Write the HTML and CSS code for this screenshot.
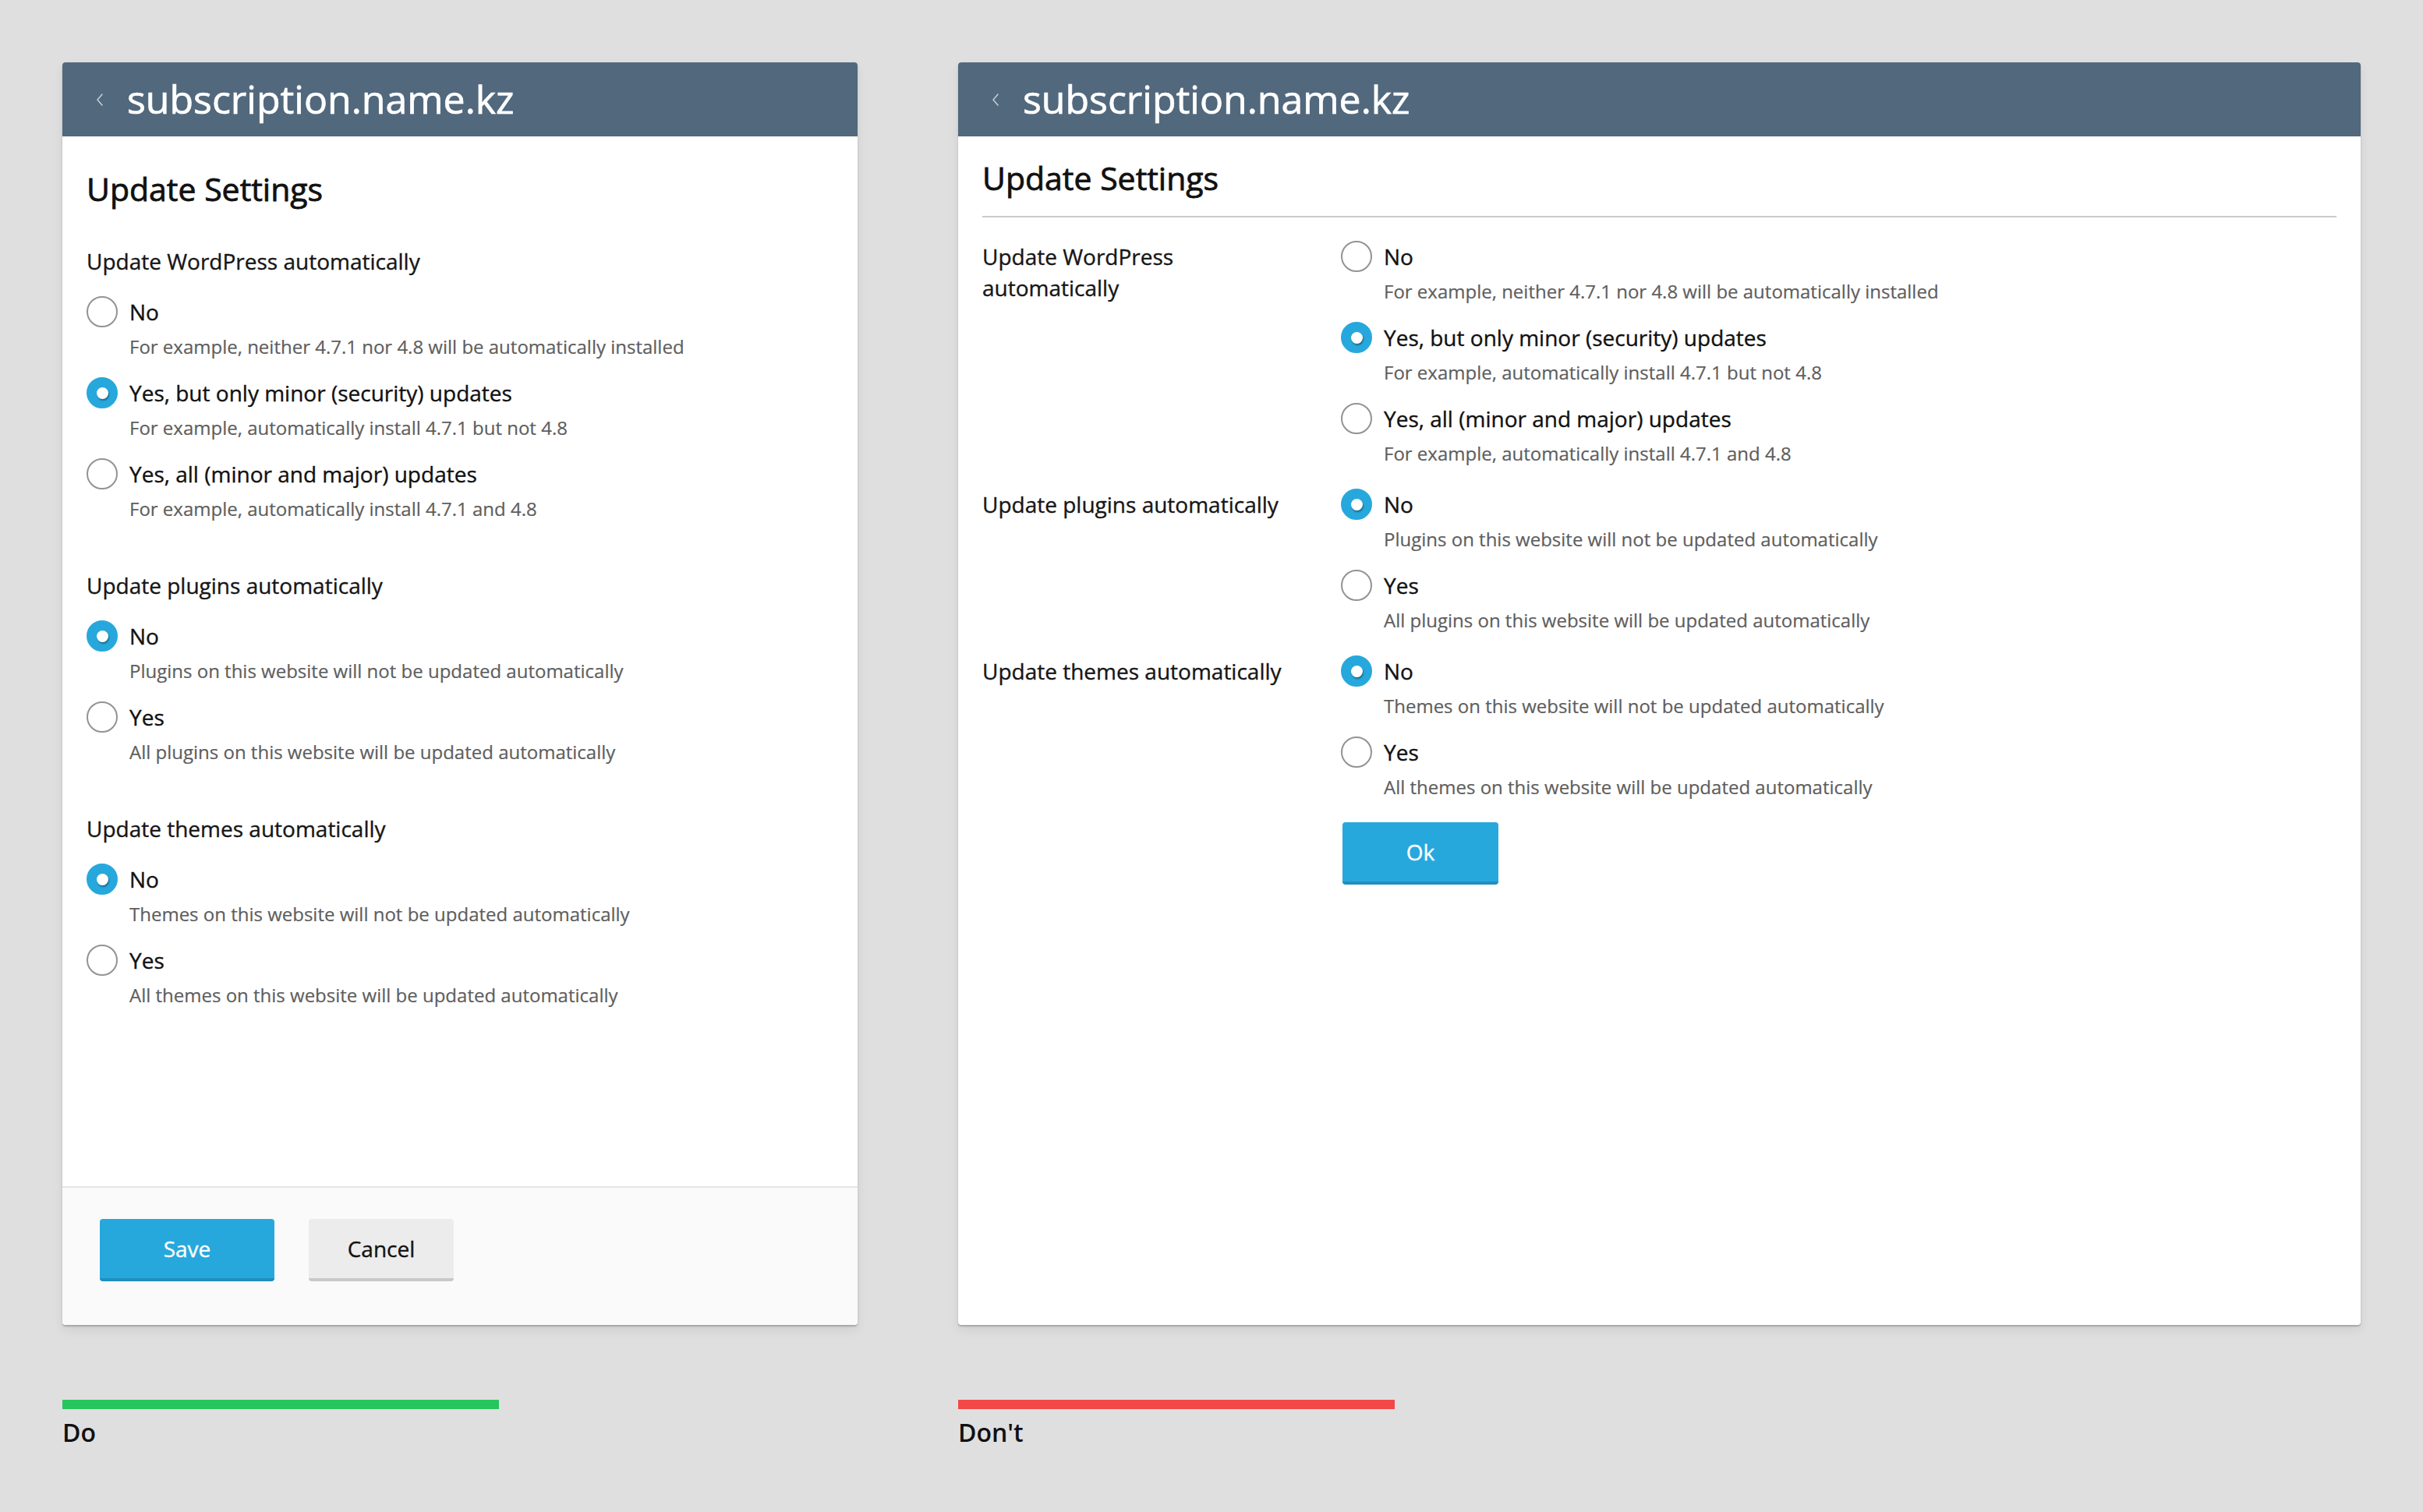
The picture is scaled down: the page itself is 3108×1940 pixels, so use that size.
FILE: index.html
```html
<!DOCTYPE html>
<html lang="en">
<head>
<meta charset="utf-8">
<title>Update Settings — Do / Don't</title>
<link rel="stylesheet" href="styles.css">
</head>
<body>
<div class="board">

  <section class="card">
    <header class="card-header">
      <svg class="back" width="12" height="18" viewBox="0 0 12 18"><path d="M9 2 L3 9 L9 16" fill="none" stroke="#c3ccd5" stroke-width="1.6" stroke-linecap="round" stroke-linejoin="round"/></svg>
      <span class="card-title">subscription.name.kz</span>
    </header>
    <div class="card-body stacked">
      <h2 class="form-title">Update Settings</h2>

      <div class="group">
        <div class="group-label">Update WordPress automatically</div>
        <div class="options">
          <div class="option">
            <div class="option-main"><span class="radio"></span><span class="option-label">No</span></div>
            <div class="option-desc">For example, neither 4.7.1 nor 4.8 will be automatically installed</div>
          </div>
          <div class="option">
            <div class="option-main"><span class="radio checked"></span><span class="option-label">Yes, but only minor (security) updates</span></div>
            <div class="option-desc">For example, automatically install 4.7.1 but not 4.8</div>
          </div>
          <div class="option">
            <div class="option-main"><span class="radio"></span><span class="option-label">Yes, all (minor and major) updates</span></div>
            <div class="option-desc">For example, automatically install 4.7.1 and 4.8</div>
          </div>
        </div>
      </div>

      <div class="group">
        <div class="group-label">Update plugins automatically</div>
        <div class="options">
          <div class="option">
            <div class="option-main"><span class="radio checked"></span><span class="option-label">No</span></div>
            <div class="option-desc">Plugins on this website will not be updated automatically</div>
          </div>
          <div class="option">
            <div class="option-main"><span class="radio"></span><span class="option-label">Yes</span></div>
            <div class="option-desc">All plugins on this website will be updated automatically</div>
          </div>
        </div>
      </div>

      <div class="group">
        <div class="group-label">Update themes automatically</div>
        <div class="options">
          <div class="option">
            <div class="option-main"><span class="radio checked"></span><span class="option-label">No</span></div>
            <div class="option-desc">Themes on this website will not be updated automatically</div>
          </div>
          <div class="option">
            <div class="option-main"><span class="radio"></span><span class="option-label">Yes</span></div>
            <div class="option-desc">All themes on this website will be updated automatically</div>
          </div>
        </div>
      </div>
    </div>
    <footer class="card-footer">
      <button class="btn btn-primary btn-save">Save</button>
      <button class="btn btn-secondary btn-cancel">Cancel</button>
    </footer>
  </section>

  <section class="card">
    <header class="card-header">
      <svg class="back" width="12" height="18" viewBox="0 0 12 18"><path d="M9 2 L3 9 L9 16" fill="none" stroke="#c3ccd5" stroke-width="1.6" stroke-linecap="round" stroke-linejoin="round"/></svg>
      <span class="card-title">subscription.name.kz</span>
    </header>
    <div class="card-body columns">
      <h2 class="form-title ruled">Update Settings</h2>

      <div class="rows">
        <div class="row">
          <div class="row-label">Update WordPress automatically</div>
          <div class="options">
            <div class="option">
              <div class="option-main"><span class="radio"></span><span class="option-label">No</span></div>
              <div class="option-desc">For example, neither 4.7.1 nor 4.8 will be automatically installed</div>
            </div>
            <div class="option">
              <div class="option-main"><span class="radio checked"></span><span class="option-label">Yes, but only minor (security) updates</span></div>
              <div class="option-desc">For example, automatically install 4.7.1 but not 4.8</div>
            </div>
            <div class="option">
              <div class="option-main"><span class="radio"></span><span class="option-label">Yes, all (minor and major) updates</span></div>
              <div class="option-desc">For example, automatically install 4.7.1 and 4.8</div>
            </div>
          </div>
        </div>

        <div class="row">
          <div class="row-label">Update plugins automatically</div>
          <div class="options">
            <div class="option">
              <div class="option-main"><span class="radio checked"></span><span class="option-label">No</span></div>
              <div class="option-desc">Plugins on this website will not be updated automatically</div>
            </div>
            <div class="option">
              <div class="option-main"><span class="radio"></span><span class="option-label">Yes</span></div>
              <div class="option-desc">All plugins on this website will be updated automatically</div>
            </div>
          </div>
        </div>

        <div class="row">
          <div class="row-label">Update themes automatically</div>
          <div class="options">
            <div class="option">
              <div class="option-main"><span class="radio checked"></span><span class="option-label">No</span></div>
              <div class="option-desc">Themes on this website will not be updated automatically</div>
            </div>
            <div class="option">
              <div class="option-main"><span class="radio"></span><span class="option-label">Yes</span></div>
              <div class="option-desc">All themes on this website will be updated automatically</div>
            </div>
          </div>
        </div>

        <div class="row">
          <div class="row-label"></div>
          <div><button class="btn btn-primary btn-ok">Ok</button></div>
        </div>
      </div>
    </div>
  </section>

  <div class="caption">
    <div class="caption-bar good"></div>
    <div class="caption-text">Do</div>
  </div>
  <div class="caption">
    <div class="caption-bar bad"></div>
    <div class="caption-text">Don't</div>
  </div>

</div>
</body>
</html>
```

FILE: styles.css
```css
* { box-sizing: border-box; }

html, body {
  margin: 0;
  padding: 0;
}

body {
  background: #e0dfe0;
  font-family: "Open Sans", "Noto Sans", "Liberation Sans", sans-serif;
  color: #222;
  min-height: 1940px;
}

.board {
  display: grid;
  grid-template-columns: 1020px 1799px;
  column-gap: 129px;
  row-gap: 96px;
  padding: 80px 0 0 80px;
}

.card {
  background: #fff;
  border-radius: 4px;
  min-height: 1620px;
  display: flex;
  flex-direction: column;
  overflow: hidden;
  box-shadow: 0 2px 2px rgba(0,0,0,0.22), 0 7px 14px rgba(0,0,0,0.07);
}

.card-header {
  height: 95px;
  background: #52687d;
  display: flex;
  align-items: center;
  padding-left: 42px;
  gap: 29px;
  flex-shrink: 0;
}

.back { display: block; }

.card-title {
  color: #fff;
  font-size: 50px;
  line-height: 95px;
  white-space: nowrap;
  -webkit-text-stroke: 0.7px #fff;
}

.card-body {
  flex: 1;
  padding: 40px 31px 0 31px;
}

.form-title {
  margin: 0;
  font-size: 41px;
  line-height: 54px;
  font-weight: 400;
  color: #111;
  -webkit-text-stroke: 0.8px #111;
}

.stacked .group { margin-top: 46px; }
.stacked .group + .group { margin-top: 62px; }

.group-label,
.row-label {
  font-size: 28px;
  line-height: 40px;
  color: #161616;
  -webkit-text-stroke: 0.35px #161616;
}

.stacked .options { margin-top: 25px; }

.options {
  display: flex;
  flex-direction: column;
  gap: 23px;
}

.option-main {
  display: flex;
  align-items: center;
  gap: 15px;
}

.radio {
  width: 40px;
  height: 40px;
  border-radius: 50%;
  border: 2px solid #939393;
  flex-shrink: 0;
  display: flex;
  align-items: center;
  justify-content: center;
  background: #fff;
}

.radio.checked {
  background: #27a8dd;
  border-color: #27a8dd;
}

.radio.checked::after {
  content: "";
  width: 15px;
  height: 15px;
  border-radius: 50%;
  background: #fff;
  box-shadow: 1px 2px 2px rgba(0,0,0,0.35);
}

.option-label {
  font-size: 28px;
  line-height: 40px;
  color: #111;
  -webkit-text-stroke: 0.35px #111;
}

.option-desc {
  margin-top: 9px;
  padding-left: 55px;
  font-size: 24px;
  line-height: 32px;
  color: #5e5e5e;
  -webkit-text-stroke: 0.2px #5e5e5e;
}

/* Right card: label column layout */
.columns { padding-top: 26px; }

.form-title.ruled {
  padding-bottom: 22px;
  border-bottom: 2px solid #cbcbcb;
}

.rows {
  display: flex;
  flex-direction: column;
  gap: 29px;
  margin-top: 30px;
}

.row {
  display: grid;
  grid-template-columns: 460px 1fr;
}

.row-label { padding-right: 50px; }

.card-footer {
  background: #fafafa;
  border-top: 2px solid #e6e6e6;
  padding: 40px 48px 56px 48px;
  display: flex;
  gap: 44px;
  flex-shrink: 0;
}

.btn {
  font-family: "Open Sans", "Noto Sans", "Liberation Sans", sans-serif;
  font-size: 28px;
  line-height: 40px;
  height: 80px;
  border: 0;
  border-radius: 4px;
  padding: 0;
  cursor: pointer;
}

.btn-primary {
  background: #27a8dd;
  color: #fff;
  border-bottom: 4px solid #1f8fbf;
  -webkit-text-stroke: 0.35px #fff;
}

.btn-secondary {
  background: #ececec;
  color: #111;
  border-bottom: 4px solid #c8c8c8;
  -webkit-text-stroke: 0.35px #111;
}

.btn-save { width: 224px; }
.btn-cancel { width: 186px; }
.btn-ok { width: 200px; margin-left: 2px; }

.caption-bar {
  width: 560px;
  height: 12px;
}
.caption-bar.good { background: #27c55e; }
.caption-bar.bad { background: #f24848; }

.caption-text {
  margin-top: 8px;
  font-size: 32px;
  line-height: 44px;
  font-weight: 600;
  color: #111;
}
```
